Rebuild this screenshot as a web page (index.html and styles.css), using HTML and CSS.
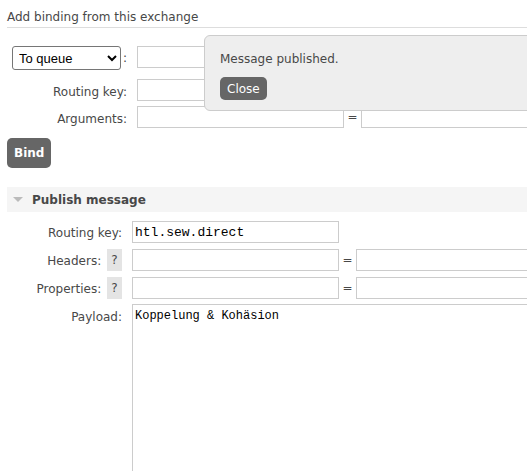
FILE: index.html
```html
<!DOCTYPE html>
<html>
<head>
<meta charset="utf-8">
<title>Exchange</title>
<link rel="stylesheet" href="styles.css">
</head>
<body>
<div class="page">
  <section class="binding">
    <h3 class="section-title">Add binding from this exchange</h3>
    <div class="form form-bind">
      <div class="label label-select"><select class="dest"><option>To queue</option><option>To exchange</option></select><span class="colon">:</span></div>
      <input class="field" type="text">
      <span></span>
      <span></span>
      <label class="label">Routing key:</label>
      <input class="field" type="text">
      <span></span>
      <span></span>
      <label class="label">Arguments:</label>
      <input class="field" type="text">
      <span class="eq">=</span>
      <input class="field" type="text">
    </div>
    <button class="btn btn-bind">Bind</button>
  </section>

  <section class="publish">
    <div class="toggle-head"><span class="tri"></span>Publish message</div>
    <div class="form form-publish">
      <label class="label">Routing key:</label>
      <input class="field mono" type="text" value="htl.sew.direct">
      <span></span>
      <span></span>
      <label class="label">Headers: <span class="help">?</span></label>
      <input class="field" type="text">
      <span class="eq">=</span>
      <input class="field" type="text">
      <label class="label">Properties: <span class="help">?</span></label>
      <input class="field" type="text">
      <span class="eq">=</span>
      <input class="field" type="text">
      <label class="label label-top">Payload:</label>
      <textarea class="payload">Koppelung &amp; Kohäsion</textarea>
    </div>
  </section>

  <div class="popup">
    <p class="popup-text">Message published.</p>
    <button class="btn btn-close">Close</button>
  </div>
</div>
</body>
</html>
```

FILE: styles.css
```css
html, body {
  margin: 0;
  padding: 0;
  background: #fff;
  overflow: hidden;
}

body {
  font-family: "DejaVu Sans", Verdana, sans-serif;
  font-size: 12px;
  color: #484848;
  width: 527px;
  height: 471px;
}

.page {
  position: relative;
  padding-left: 7px;
  width: 800px;
}

.section-title {
  margin: 0;
  padding-top: 10px;
  padding-bottom: 2px;
  font-size: 12px;
  font-weight: normal;
  line-height: 15px;
  border-bottom: 1px solid #ddd;
}

.form {
  display: grid;
  align-items: center;
}

.form-bind {
  margin-top: 18px;
  grid-template-columns: 130px 207px 17px 400px;
  grid-template-rows: 28px 22px 22px;
  row-gap: 5px;
}

.form-bind > :nth-child(-n+4) {
  align-self: start;
}

.label {
  text-align: right;
  padding-right: 10px;
  white-space: nowrap;
}

.form-bind .label {
  padding-top: 4px;
}

.form-bind .label-select {
  padding-top: 0;
}

.label-select {
  display: flex;
  align-items: center;
  justify-content: flex-start;
  padding-left: 5px;
}

.dest {
  width: 110px;
  height: 24px;
  font-family: "Liberation Sans", Arial, sans-serif;
  font-size: 13px;
  color: #000;
  border: 1px solid #767676;
  border-radius: 3px;
  background: #fff;
  padding: 0 2px;
}

.colon {
  margin-left: 2px;
}

.field {
  box-sizing: border-box;
  height: 22px;
  width: 100%;
  margin: 0;
  border: 1px solid #ccc;
  background: #fff;
  padding: 0 3px;
  outline: none;
}

.mono {
  font-family: "Liberation Mono", "Courier New", monospace;
  font-size: 13px;
  color: #000;
  padding-left: 2px;
}

.eq {
  text-align: center;
}

.btn {
  display: block;
  border: 0;
  margin: 0;
  background: #666;
  color: #fff;
  font-family: "DejaVu Sans", Verdana, sans-serif;
  font-size: 12px;
  border-radius: 5px;
  cursor: pointer;
}

.btn-bind {
  margin-top: 10px;
  height: 30px;
  padding: 0 7px;
  font-weight: bold;
}

.publish {
  margin-top: 19px;
}

.toggle-head {
  height: 25px;
  line-height: 26px;
  background: #f5f5f5;
  font-weight: bold;
  padding-left: 6px;
}

.tri {
  display: inline-block;
  width: 0;
  height: 0;
  border-left: 5px solid transparent;
  border-right: 5px solid transparent;
  border-top: 5px solid #bbb;
  margin-right: 9px;
  vertical-align: 2px;
}

.form-publish {
  margin-top: 9px;
  grid-template-columns: 125px 207px 17px 400px;
  grid-template-rows: 22px 22px 22px auto;
  row-gap: 6px;
}

.form-publish .label {
  padding-top: 2px;
}

.help {
  display: inline-block;
  width: 15px;
  height: 22px;
  line-height: 22px;
  text-align: center;
  background: #e4e4e4;
  vertical-align: middle;
  margin-left: 2px;
  margin-top: -2px;
}

.form-publish .label-top {
  align-self: start;
  padding-top: 5px;
}

.payload {
  grid-column: 2 / span 3;
  box-sizing: border-box;
  height: 200px;
  width: 100%;
  margin: -1px 0 0;
  border: 1px solid #ccc;
  padding: 4px 2px 2px;
  font-family: "Liberation Mono", "Courier New", monospace;
  font-size: 12px;
  color: #000;
  resize: none;
  outline: none;
}

.popup {
  position: absolute;
  left: 204px;
  top: 35px;
  width: 400px;
  height: 76px;
  box-sizing: border-box;
  background: #eee;
  border: 1px solid #ccc;
  border-radius: 6px;
  padding: 16px 15px 0;
}

.popup-text {
  margin: 0;
  line-height: 15px;
}

.btn-close {
  margin-top: 10px;
  height: 23px;
  padding: 0 7px;
}
```
